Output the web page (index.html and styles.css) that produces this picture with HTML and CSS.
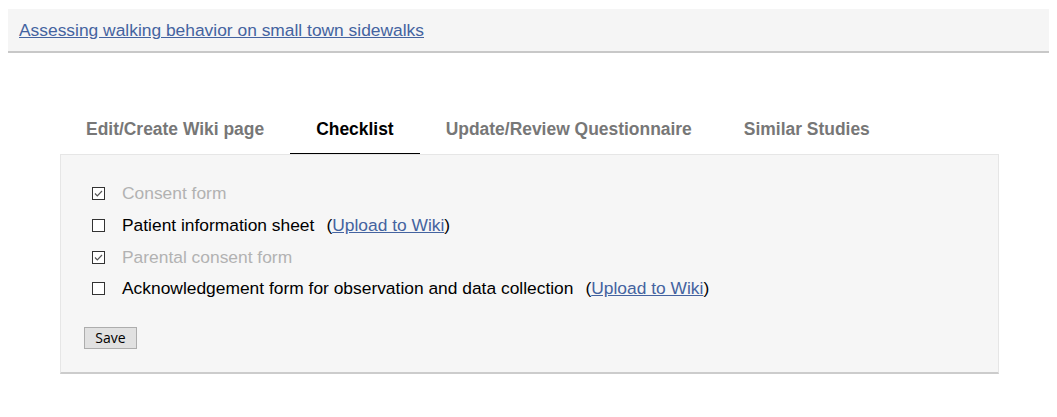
FILE: index.html
```html
<!DOCTYPE html>
<html>
<head>
<meta charset="utf-8">
<link rel="stylesheet" href="styles.css">
</head>
<body>
<div class="header"><a href="#" class="title-link">Assessing walking behavior on small town sidewalks</a></div>
<div class="tabs-wrap">
  <div class="tabs">
    <div class="tab">Edit/Create Wiki page</div>
    <div class="tab active">Checklist</div>
    <div class="tab">Update/Review Questionnaire</div>
    <div class="tab">Similar Studies</div>
  </div>
  <div class="panel">
    <ul class="checklist">
      <li class="item done">
        <svg class="cb" width="13" height="13" viewBox="0 0 13 13"><rect x="0.5" y="0.5" width="12" height="12" fill="#fff" stroke="#333"/><polyline points="3,6.5 5.3,8.8 10,4" fill="none" stroke="#555" stroke-width="1.2"/></svg>
        <span>Consent form</span>
      </li>
      <li class="item">
        <svg class="cb" width="13" height="13" viewBox="0 0 13 13"><rect x="0.5" y="0.5" width="12" height="12" fill="#fff" stroke="#333"/></svg>
        <span>Patient information sheet</span><span class="upload">(<a href="#">Upload to Wiki</a>)</span>
      </li>
      <li class="item done">
        <svg class="cb" width="13" height="13" viewBox="0 0 13 13"><rect x="0.5" y="0.5" width="12" height="12" fill="#fff" stroke="#333"/><polyline points="3,6.5 5.3,8.8 10,4" fill="none" stroke="#555" stroke-width="1.2"/></svg>
        <span>Parental consent form</span>
      </li>
      <li class="item">
        <svg class="cb" width="13" height="13" viewBox="0 0 13 13"><rect x="0.5" y="0.5" width="12" height="12" fill="#fff" stroke="#333"/></svg>
        <span>Acknowledgement form for observation and data collection</span><span class="upload">(<a href="#">Upload to Wiki</a>)</span>
      </li>
    </ul>
    <button class="save">Save</button>
  </div>
</div>
</body>
</html>
```

FILE: styles.css
```css
html, body {
  margin: 0;
  padding: 0;
  background: #fff;
}
body {
  padding: 9px 8px 8px 8px;
  font-family: "Liberation Sans", Arial, sans-serif;
  font-size: 17.4px;
  color: #000;
}
.header {
  background: #f5f5f5;
  border-bottom: 2px solid #c8c8c8;
  padding: 11px 11px 11px 11px;
  line-height: 20px;
}
.title-link {
  color: #4463a0;
  text-decoration: underline;
}
.tabs-wrap {
  margin: 52px 50px 0 52px;
}
.tabs {
  display: flex;
}
.tab {
  padding: 14px 26px 14px 26px;
  line-height: 20px;
  font-size: 17.45px;
  font-weight: bold;
  color: #777;
  border-bottom: 1px solid transparent;
}
.tab.active {
  color: #000;
  border-bottom: 1px solid #000;
}
.panel {
  background: #f6f6f6;
  border: 1px solid #e6e6e6;
  border-bottom: 2px solid #cccccc;
  padding: 23px 24px 23px 23px;
}
.checklist {
  list-style: none;
  margin: 0 0 22px 0;
  padding: 0 0 0 8px;
}
.item {
  display: flex;
  align-items: center;
  height: 31.67px;
}
.cb {
  display: block;
  margin-right: 17px;
  flex: none;
}
.item.done span {
  color: #b2b2b2;
}
.upload {
  margin-left: 12px;
}
.upload a {
  color: #4463a0;
}
.save {
  display: block;
  width: 53px;
  height: 22px;
  margin: 0;
  padding: 0;
  font-family: "Open Sans", "Noto Sans", sans-serif;
  font-size: 14px;
  color: #000;
  background: #e1e1e1;
  border: 1px solid #adadad;
  border-radius: 0;
  line-height: 18px;
}
```
